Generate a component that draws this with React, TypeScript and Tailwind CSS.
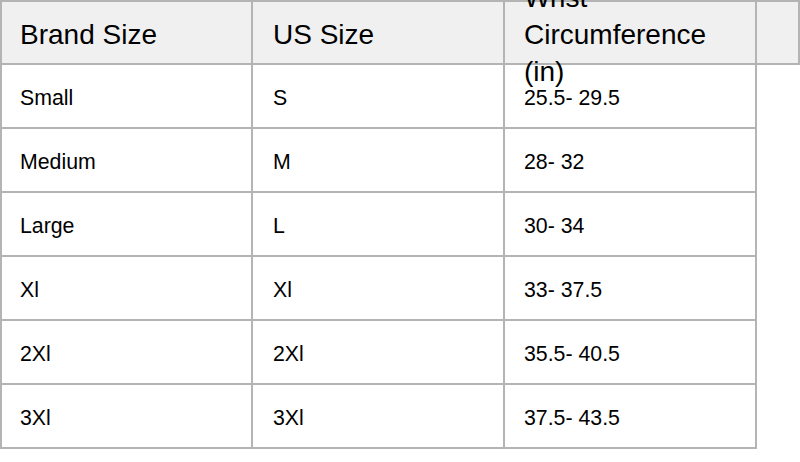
const rows = [
  ["Small", "S", "25.5- 29.5"],
  ["Medium", "M", "28- 32"],
  ["Large", "L", "30- 34"],
  ["Xl", "Xl", "33- 37.5"],
  ["2Xl", "2Xl", "35.5- 40.5"],
  ["3Xl", "3Xl", "37.5- 43.5"],
];

const App = () => {
  return (
    <div className="min-h-screen bg-white text-black font-['Liberation_Sans',Arial,sans-serif]">
      {/* Header */}
      <div className="flex h-[65px] text-[28px] leading-[37px]">
        <div className="w-[253px] shrink-0 flex items-center pt-1 pl-[18px] bg-[#f0f0f0] border-2 border-[#b4b4b4]">
          Brand Size
        </div>
        <div className="w-[252px] shrink-0 flex items-center pt-1 pl-5 bg-[#f0f0f0] border-y-2 border-r-2 border-[#b4b4b4]">
          US Size
        </div>
        <div className="w-[252px] shrink-0 flex items-center pt-1 pl-[19px] pr-5 bg-[#f0f0f0] border-y-2 border-r-2 border-[#b4b4b4]">
          <span>Wrist Circumference (in)</span>
        </div>
        <div className="w-[43px] shrink-0 bg-[#f0f0f0] border-y-2 border-r-2 border-[#b4b4b4]" />
      </div>

      {/* Body */}
      {rows.map((row) => (
        <div key={row[0]} className="flex h-[64px] text-[21.3px]">
          <div className="w-[253px] shrink-0 flex items-center pt-[5px] pl-[18px] border-x-2 border-b-2 border-[#b4b4b4]">
            {row[0]}
          </div>
          <div className="w-[252px] shrink-0 flex items-center pt-[5px] pl-5 border-r-2 border-b-2 border-[#b4b4b4]">
            {row[1]}
          </div>
          <div className="w-[252px] shrink-0 flex items-center pt-[5px] pl-[19px] border-r-2 border-b-2 border-[#b4b4b4]">
            {row[2]}
          </div>
        </div>
      ))}
    </div>
  );
};

export default App;
